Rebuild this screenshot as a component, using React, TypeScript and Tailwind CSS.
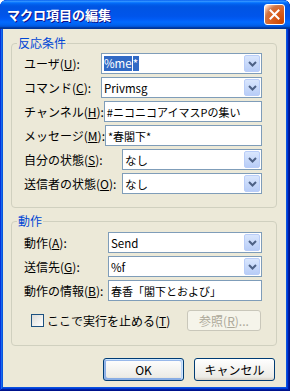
import React from "react";

const U = ({ c }: { c: string }) => <span className="underline underline-offset-[1px]">{c}</span>;

const Chevron = () => (
  <svg width="9" height="6" viewBox="0 0 9 6">
    <path d="M1 1 L4.5 4.5 L8 1" fill="none" stroke="#4d6185" strokeWidth="2" />
  </svg>
);

const Combo = ({ w, children }: { w: string; children: React.ReactNode }) => (
  <div className={`${w} h-[21px] border border-[#7f9db9] bg-white flex items-center`}>
    <div className="flex-1 pl-[2px] flex items-center whitespace-nowrap text-[11.5px]">{children}</div>
    <div className="w-[16px] h-[17px] mr-[1px] rounded-[2px] border border-[#b9cdf8] bg-[linear-gradient(180deg,#d9e6fd,#b8cdf7)] flex items-center justify-center">
      <Chevron />
    </div>
  </div>
);

const Field = ({ w, children }: { w: string; children: React.ReactNode }) => (
  <div className={`${w} h-[21px] border border-[#7f9db9] bg-white flex items-center pl-[2px] whitespace-nowrap text-[11px]`}>
    {children}
  </div>
);

const Row = ({ label, children }: { label: React.ReactNode; children: React.ReactNode }) => (
  <div className="flex items-center h-[21px]">
    <span className="flex-1 whitespace-nowrap">{label}</span>
    {children}
  </div>
);

export default function App() {
  return (
    <div className="w-[290px] h-[391px] flex flex-col rounded-t-[7px] bg-[#0a52de] shadow-[inset_-1px_-1px_#00138c,inset_1px_1px_#0831d9,inset_-2px_-2px_#001ea0,inset_2px_2px_#166aee,inset_-3px_-3px_#003bda,inset_3px_3px_#0855dd] font-['Noto_Sans_CJK_JP',sans-serif] text-[12px] leading-[14px] text-black">
      <div className="h-[29px] flex items-center justify-between pl-[7px] pr-[5px] rounded-t-[7px] bg-[linear-gradient(180deg,#0058ee_0%,#3593ff_4%,#288eff_6%,#127dff_8%,#036ffc_10%,#0262ee_14%,#0057e5_20%,#0054e3_24%,#0055eb_56%,#005bf5_66%,#026afe_76%,#0062ef_86%,#0052d6_92%,#0040ab_94%,#003092_100%)]">
        <span className="text-white font-bold text-[13px] leading-[16px] [text-shadow:1px_1px_#0f1089] mt-[1px]">マクロ項目の編集</span>
        <div className="w-[21px] h-[21px] rounded-[3px] border border-white bg-[radial-gradient(circle_at_90%_90%,#cc4600_0%,#dc6527_55%,#cd7546_70%,#ffccb2_90%,#ffffff_100%)] flex items-center justify-center">
          <svg width="11" height="11" viewBox="0 0 11 11">
            <path d="M1.5 1.5 L9.5 9.5 M9.5 1.5 L1.5 9.5" stroke="#ffffff" strokeWidth="2" strokeLinecap="square" />
          </svg>
        </div>
      </div>
      <div className="flex-1 ml-[3px] mr-[4px] mb-[4px] bg-[#ece9d8] pt-[14px] flex flex-col">
        <div className="relative ml-[8px] w-[266px] border border-[#d0d0bf] rounded-[4px] pt-[9px] pb-[13px] pl-[12px] pr-[14px] flex flex-col gap-[3px]">
          <span className="absolute top-[-8px] left-[5px] px-[1px] bg-[#ece9d8] text-[#0046d5]">反応条件</span>
          <Row label={<>ユーザ(<U c="U" />):</>}>
            <Combo w="w-[161px]">
              <span className="bg-[#316ac5] text-white leading-[15px]">%me</span>
              <span className="bg-[#316ac5] text-white leading-[15px] ml-[1px] pr-[1px]">*</span>
            </Combo>
          </Row>
          <Row label={<>コマンド(<U c="C" />):</>}>
            <Combo w="w-[161px]">Privmsg</Combo>
          </Row>
          <Row label={<>チャンネル(<U c="H" />):</>}>
            <Field w="w-[161px]">#ニコニコアイマスPの集い</Field>
          </Row>
          <Row label={<>メッセージ(<U c="M" />):</>}>
            <Field w="w-[161px]">*春閣下*</Field>
          </Row>
          <Row label={<>自分の状態(<U c="S" />):</>}>
            <Combo w="w-[140px]">なし</Combo>
          </Row>
          <Row label={<>送信者の状態(<U c="O" />):</>}>
            <Combo w="w-[140px]">なし</Combo>
          </Row>
        </div>
        <div className="relative ml-[8px] mt-[13px] w-[266px] border border-[#d0d0bf] rounded-[4px] pt-[10px] pb-[14px] pl-[12px] pr-[14px] flex flex-col gap-[3px]">
          <span className="absolute top-[-8px] left-[5px] px-[1px] bg-[#ece9d8] text-[#0046d5]">動作</span>
          <Row label={<>動作(<U c="A" />):</>}>
            <Combo w="w-[154px]">Send</Combo>
          </Row>
          <Row label={<>送信先(<U c="G" />):</>}>
            <Combo w="w-[154px]">%f</Combo>
          </Row>
          <Row label={<>動作の情報(<U c="B" />):</>}>
            <Field w="w-[154px]">春香「閣下とおよび」</Field>
          </Row>
          <div className="flex items-center justify-between h-[21px] mt-[6px] pl-[7px] pr-[1px]">
            <div className="flex items-center gap-[3px]">
              <div className="w-[13px] h-[13px] border border-[#1c5180] bg-[linear-gradient(135deg,#dcdcd7,#ffffff)]" />
              <span>ここで実行を止める(<U c="T" />)</span>
            </div>
            <div className="w-[74px] h-[21px] rounded-[3px] border border-[#c9c7ba] bg-[#f5f4ea] text-[#aca899] flex items-center justify-center">
              参照(<U c="R" />)...
            </div>
          </div>
        </div>
        <div className="flex justify-end gap-[10px] mt-[12px] pr-[11px]">
          <div className="w-[81px] h-[23px] rounded-[3px] border border-[#003c74] bg-[linear-gradient(180deg,#ffffff,#ecebe6_86%,#d6d0c5)] shadow-[inset_-1px_1px_#cee7ff,inset_1px_2px_#98b8ea,inset_-2px_2px_#bcd4f6,inset_1px_-1px_#89ade4,inset_2px_-2px_#89ade4] flex items-center justify-center">
            OK
          </div>
          <div className="w-[81px] h-[23px] rounded-[3px] border border-[#003c74] bg-[linear-gradient(180deg,#ffffff,#ecebe6_86%,#d6d0c5)] flex items-center justify-center">
            キャンセル
          </div>
        </div>
      </div>
    </div>
  );
}
